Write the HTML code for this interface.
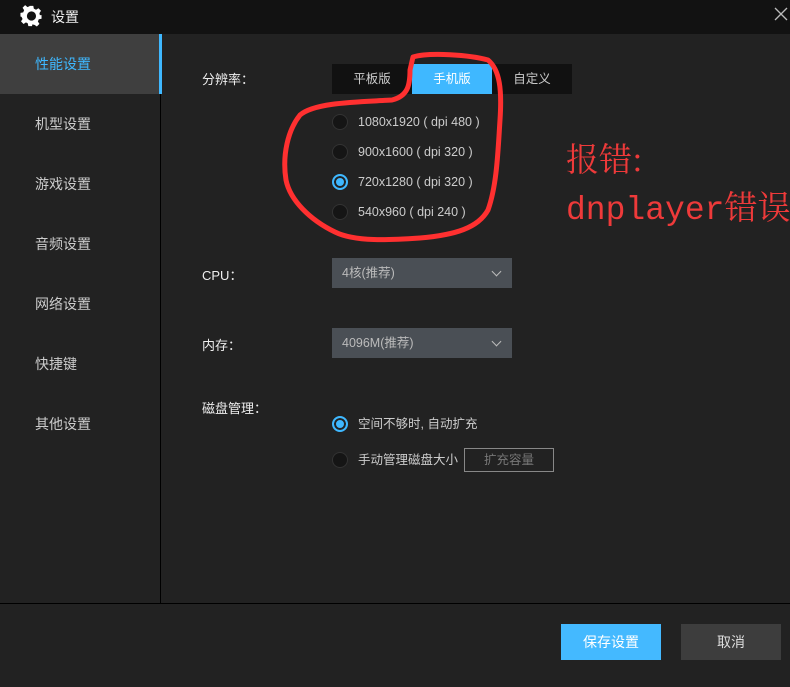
<!DOCTYPE html>
<html><head><meta charset="utf-8"><style>
*{margin:0;padding:0;box-sizing:border-box}
body{width:790px;height:687px;background:#222;position:relative;overflow:hidden;font-family:"Liberation Sans","Noto Sans CJK SC",sans-serif;color:#ddd;font-size:13px}
.abs{position:absolute}
.title{left:0;top:0;width:790px;height:34px;background:#121212}
.side{left:0;top:34px;width:161px;height:569px;background:#222;border-right:1px solid #000}
.item{position:absolute;left:0;width:160px;height:60px;line-height:60px;padding-left:35px;font-size:14px;color:#ccc}
.radio{position:absolute;width:16px;height:16px;border-radius:50%;background:#151515;border:1px solid #333}
.radio.on{background:#3fb8ff;border:2px solid #3fb8ff;box-shadow:inset 0 0 0 2px #222}
.rl{position:absolute;font-size:12.5px;color:#ccc;line-height:16px}
.sel{position:absolute;left:332px;width:180px;height:30px;background:#4a4f55;color:#bbb;font-size:12.5px;line-height:30px;padding-left:10px}
.sel:after{content:"";position:absolute;right:12px;top:10px;width:6px;height:6px;border-right:1px solid #bbb;border-bottom:1px solid #bbb;transform:rotate(45deg)}
.lbl{position:absolute;left:202px;font-size:13px;color:#eee}
.red{position:absolute;left:566px;font-family:'Liberation Mono','Noto Serif CJK SC',serif;font-size:33px;color:#ee3a3a;line-height:40px;white-space:nowrap}
</style></head><body>
<div class="abs title">
<svg class="abs" style="left:20px;top:5px" width="22" height="22" viewBox="0 0 24 24"><path fill="#fff" d="M10 1h4l.6 3 2.4 1.2 2.6-1.7 2.8 2.8-1.7 2.6L21.1 11H23v4l-3 .6-1 2.4 1.7 2.6-2.8 2.8-2.6-1.7L13 21.1 12.6 23h-4l-.6-3L6 19l-2.6 1.7-2.8-2.8L2.3 15.3 1.2 13 0 12.6v-4l3-.6 1-2.4-1.7-2.6 2.8-2.8L7.7 2.3 10 1.2z M12 7a5 5 0 1 0 0 10a5 5 0 1 0 0-10z" fill-rule="evenodd" transform="translate(0.5,0)"/></svg>
<div class="abs" style="left:51px;top:7px;font-size:14px;color:#eee">设置</div>
<svg class="abs" style="left:774px;top:7px" width="14" height="14"><path d="M1 1L13 13M13 1L1 13" stroke="#bbb" stroke-width="1.3"/></svg>
</div>
<div class="abs side">
<div class="item" style="top:0;background:#3f3f3f;color:#3fb8ff">性能设置</div>
<div class="abs" style="left:159px;top:0;width:3px;height:60px;background:#3fb8ff"></div>
<div class="item" style="top:60px">机型设置</div>
<div class="item" style="top:120px">游戏设置</div>
<div class="item" style="top:180px">音频设置</div>
<div class="item" style="top:240px">网络设置</div>
<div class="item" style="top:300px">快捷键</div>
<div class="item" style="top:360px">其他设置</div>
</div>
<div class="abs" style="left:0;top:603px;width:790px;height:1px;background:#000"></div>

<div class="lbl" style="top:69px">分辨率：</div>
<div class="abs" style="left:332px;top:64px;width:240px;height:30px;background:#111"></div>
<div class="abs" style="left:332px;top:64px;width:80px;height:30px;line-height:30px;text-align:center;font-size:12.5px;color:#ccc">平板版</div>
<div class="abs" style="left:412px;top:64px;width:80px;height:30px;line-height:30px;text-align:center;font-size:12.5px;color:#fff;background:#3fb8ff">手机版</div>
<div class="abs" style="left:492px;top:64px;width:80px;height:30px;line-height:30px;text-align:center;font-size:12.5px;color:#ccc">自定义</div>

<div class="radio" style="left:332px;top:114px"></div><div class="rl" style="left:358px;top:114px">1080x1920 ( dpi 480 )</div>
<div class="radio" style="left:332px;top:144px"></div><div class="rl" style="left:358px;top:144px">900x1600 ( dpi 320 )</div>
<div class="radio on" style="left:332px;top:174px"></div><div class="rl" style="left:358px;top:174px">720x1280 ( dpi 320 )</div>
<div class="radio" style="left:332px;top:204px"></div><div class="rl" style="left:358px;top:204px">540x960 ( dpi 240 )</div>

<div class="lbl" style="top:265px">CPU：</div>
<div class="sel" style="top:258px">4核(推荐)</div>
<div class="lbl" style="top:335px">内存：</div>
<div class="sel" style="top:328px">4096M(推荐)</div>
<div class="lbl" style="top:398px">磁盘管理：</div>
<div class="radio on" style="left:332px;top:416px"></div><div class="rl" style="left:358px;top:416px">空间不够时, 自动扩充</div>
<div class="radio" style="left:332px;top:452px"></div><div class="rl" style="left:358px;top:452px">手动管理磁盘大小</div>
<div class="abs" style="left:464px;top:448px;width:90px;height:24px;border:1px solid #888;color:#777;font-size:12.5px;text-align:center;line-height:22px">扩充容量</div>

<div class="abs" style="left:561px;top:624px;width:100px;height:36px;background:#44b9ff;color:#fff;text-align:center;line-height:36px;font-size:14px">保存设置</div>
<div class="abs" style="left:681px;top:624px;width:100px;height:36px;background:#3d3d3d;color:#ddd;text-align:center;line-height:36px;font-size:14px">取消</div>

<svg class="abs" style="left:0;top:0" width="790" height="687"><path d="M413 57 C430 52 470 55 488 60 C500 70 502 90 500 120 C498 150 497 185 488 210 C478 228 455 235 420 238 C390 240 355 242 335 232 C310 220 290 200 286 180 C282 155 288 130 300 115 C315 102 360 102 392 100 C408 96 410 85 410 70 Z" fill="none" stroke="#ff3030" stroke-width="5" stroke-linejoin="round"/></svg>
<div class="red" style="top:138px;font-family:'Noto Serif CJK SC',serif">报错:</div>
<div class="red" style="top:186px">dnplayer<span style="font-family:'Noto Serif CJK SC',serif">错误</span></div>
</body></html>
